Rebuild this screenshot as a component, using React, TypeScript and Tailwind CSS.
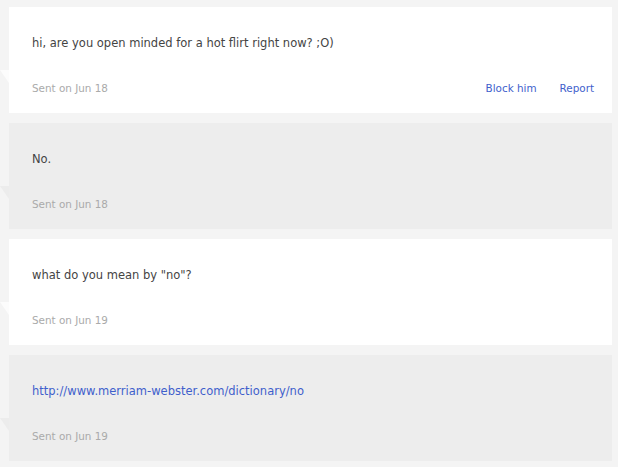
const messages = [
  { text: 'hi, are you open minded for a hot flirt right now? ;O)', date: 'Jun 18', mine: false },
  { text: 'No.', date: 'Jun 18', mine: true },
  { text: 'what do you mean by "no"?', date: 'Jun 19', mine: false },
  { text: 'http://www.merriam-webster.com/dictionary/no', date: 'Jun 19', mine: true, link: true },
]

function Message({ text, date, mine, link, first }: { text: string; date: string; mine: boolean; link?: boolean; first?: boolean }) {
  return (
    <div className={`relative h-[106px] pl-[23px] pr-[18px] pt-[28px] ${mine ? 'bg-[#ededed]' : 'bg-white'}`}>
      <div
        className={`absolute left-[-9px] top-[63px] w-[9px] h-[13px] [clip-path:polygon(0_0,100%_0,100%_100%)] ${mine ? 'bg-[#ececec]' : 'bg-[#fcfcfc]'}`}
      ></div>
      <div className="text-[11.5px] leading-[16px] text-[#444]">
        {link ? <a href="#" className="text-[#3f5fcc]">{text}</a> : text}
      </div>
      <div className="mt-[30px] flex items-center justify-between text-[10.4px] leading-[14px]">
        <span className="text-[#aaa]">Sent on {date}</span>
        {first && (
          <div className="flex gap-[23px] text-[#3f5fcc]">
            <a href="#">Block him</a>
            <a href="#">Report</a>
          </div>
        )}
      </div>
    </div>
  )
}

export default function App() {
  return (
    <div className="min-h-[467px] bg-[#f4f4f4] pt-[7px] pl-[9px] pr-[6px] font-['DejaVu_Sans',Verdana,sans-serif]">
      <div className="flex flex-col gap-[10px]">
        {messages.map((m, i) => (
          <Message key={i} {...m} first={i === 0} />
        ))}
      </div>
    </div>
  )
}
